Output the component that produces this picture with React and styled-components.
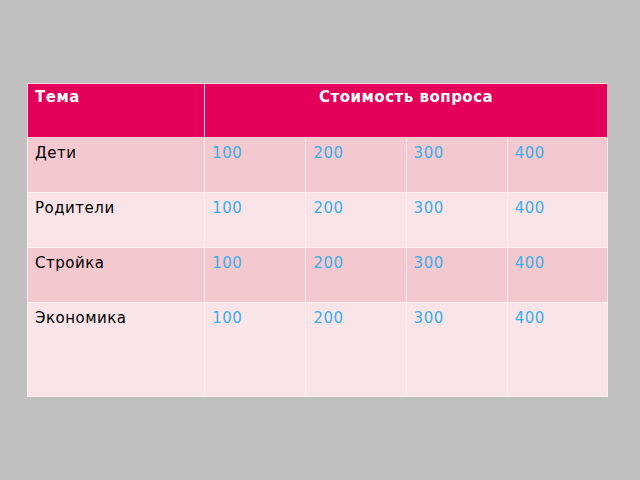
import * as React from "react";
import styled, { createGlobalStyle } from "styled-components";

const topics = ["Дети", "Родители", "Стройка", "Экономика"];
const prices = [100, 200, 300, 400];
const widths = [177, 101, 100, 101, 100];

const App = () => {
  return (
    <>
      <GlobalStyle />
      <Page>
        <Board>
          <colgroup>
            {widths.map((w, i) => (
              <Col key={i} $w={w} />
            ))}
          </colgroup>
          <thead>
            <HeadRow>
              <HeadCell>Тема</HeadCell>
              <HeadCell colSpan={4} $center>
                Стоимость вопроса
              </HeadCell>
            </HeadRow>
          </thead>
          <tbody>
            {topics.map((topic, i) => (
              <Row key={topic} $dark={i % 2 === 0} $tall={i === topics.length - 1}>
                <Cell>{topic}</Cell>
                {prices.map((p) => (
                  <Cell key={p} $price>
                    {p}
                  </Cell>
                ))}
              </Row>
            ))}
          </tbody>
        </Board>
      </Page>
    </>
  );
};

export default App;

const GlobalStyle = createGlobalStyle`
  html, body {
    margin: 0;
    padding: 0;
    background: #c0c0c0;
  }
  body {
    font-family: "DejaVu Sans", Verdana, sans-serif;
  }
`;

const Page = styled.div`
  width: 640px;
  height: 480px;
  box-sizing: border-box;
  padding: 83px 0 0 27px;
`;

const Board = styled.table`
  border-collapse: collapse;
  table-layout: fixed;
  width: 581px;
  border: 1px solid #f2d6da;
`;

const Col = styled.col`
  width: ${(p) => p.$w}px;
`;

const HeadRow = styled.tr`
  height: 54px;
  background: #e4005a;
`;

const HeadCell = styled.th`
  vertical-align: top;
  text-align: ${(p) => (p.$center ? "center" : "left")};
  padding: 4px 7px;
  font-size: 15px;
  font-weight: bold;
  letter-spacing: 0.5px;
  color: #ffffff;
  border: 1px solid #f4cfd6;
  border-top: none;
`;

const Row = styled.tr`
  height: ${(p) => (p.$tall ? "94px" : "55px")};
  background: ${(p) => (p.$dark ? "#f4c8cf" : "#f9e5e8")};
`;

const Cell = styled.td`
  vertical-align: top;
  padding: 6px 7px;
  font-size: 15px;
  letter-spacing: 0.5px;
  color: ${(p) => (p.$price ? "#3aaee6" : "#000000")};
  border: 1px solid #fbeef0;
`;
